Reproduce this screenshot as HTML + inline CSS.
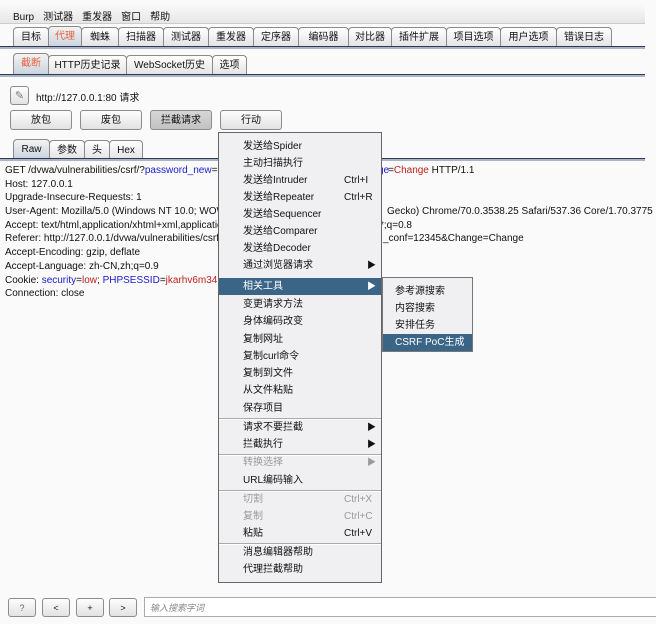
<!DOCTYPE html><html><head><meta charset="utf-8"><style>
body{margin:0;width:656px;height:624px;background:#fafafa;position:relative;overflow:hidden;font-family:"Liberation Sans","Noto Sans CJK SC",sans-serif;font-size:10px;color:#111}
.a{position:absolute}
.menubar{left:0;top:3px;width:645px;height:20px;background:linear-gradient(#fbfbfb,#e6e6e6);border-bottom:1px solid #ccc}
.menubar span{margin-right:9px}
.tab{position:absolute;height:19px;border:1px solid #8a8a8a;border-bottom:none;border-radius:4px 4px 0 0;background:linear-gradient(#fff,#e4e4e4);text-align:center;line-height:19px;box-sizing:border-box;font-size:10px}
.sel{background:linear-gradient(#f3f3f3,#c8d3de);color:#e8603a}
.line{position:absolute;left:0;width:645px;height:1px;background:#2c3a55;border-bottom:2px solid #aab4c2}
.btn{position:absolute;height:20px;border:1px solid #8c8c8c;border-radius:3px;background:linear-gradient(#fdfdfd,#e2e2e2);text-align:center;line-height:19px;box-sizing:border-box}
.req div{height:13.7px;line-height:13.7px;white-space:nowrap}
.b{color:#1a1acc}.r{color:#c0201a}
.menu{left:218px;top:132px;width:164px;height:451px;background:#f0f0f2;border:1px solid #666;box-sizing:border-box}
.mi{position:absolute;left:0;width:162px;height:17px;line-height:17px;padding-left:24px;box-sizing:border-box;white-space:nowrap}
.mi .k{position:absolute;left:125px}
.mi .ar{position:absolute;left:148px;font-size:9px}
.hl{background:#3b6587;color:#fff}
.dis{color:#9a9a9a}
.sep{position:absolute;left:0;width:162px;height:1px;background:#aaa;border-bottom:1px solid #fff}
</style></head><body>
<div class="a menubar"><div style="padding:5px 0 0 13px"><span>Burp</span><span>测试器</span><span>重发器</span><span>窗口</span><span>帮助</span></div></div>
<div class="tab" style="left:13px;top:27px;width:36px">目标</div>
<div class="tab sel" style="left:48px;top:26px;width:34px;height:21px">代理</div>
<div class="tab" style="left:81px;top:27px;width:38px">蜘蛛</div>
<div class="tab" style="left:118px;top:27px;width:46px">扫描器</div>
<div class="tab" style="left:163px;top:27px;width:46px">测试器</div>
<div class="tab" style="left:208px;top:27px;width:46px">重发器</div>
<div class="tab" style="left:253px;top:27px;width:46px">定序器</div>
<div class="tab" style="left:298px;top:27px;width:51px">编码器</div>
<div class="tab" style="left:348px;top:27px;width:44px">对比器</div>
<div class="tab" style="left:391px;top:27px;width:56px">插件扩展</div>
<div class="tab" style="left:446px;top:27px;width:55px">项目选项</div>
<div class="tab" style="left:500px;top:27px;width:57px">用户选项</div>
<div class="tab" style="left:556px;top:27px;width:56px">错误日志</div>
<div class="line" style="top:46px"></div>
<div class="tab sel" style="left:13px;top:53px;width:36px;height:22px">截断</div>
<div class="tab" style="left:48px;top:55px;width:79px">HTTP历史记录</div>
<div class="tab" style="left:126px;top:55px;width:87px">WebSocket历史</div>
<div class="tab" style="left:212px;top:55px;width:35px">选项</div>
<div class="line" style="top:74px"></div>
<div class="btn" style="left:10px;top:86px;width:19px;height:19px;font-size:11px;color:#777">✎</div>
<div class="a" style="left:36px;top:89px">http://127.0.0.1:80 请求</div>
<div class="btn" style="left:10px;top:110px;width:62px">放包</div>
<div class="btn" style="left:80px;top:110px;width:62px">废包</div>
<div class="btn" style="left:150px;top:110px;width:62px;background:linear-gradient(#d6d6d6,#c2c2c2)">拦截请求</div>
<div class="btn" style="left:220px;top:110px;width:62px">行动</div>
<div class="tab sel" style="left:13px;top:139px;width:37px;height:20px;color:#111">Raw</div>
<div class="tab" style="left:49px;top:140px;width:36px">参数</div>
<div class="tab" style="left:84px;top:140px;width:26px">头</div>
<div class="tab" style="left:109px;top:140px;width:34px">Hex</div>
<div class="line" style="top:158px"></div>
<div class="a req" style="left:5px;top:164px">
<div>GET /dvwa/vulnerabilities/csrf/?<span class="b">password_new</span>=<span class="a b" style="left:373px">ge</span><span class="a" style="left:383px">=<span class="r">Change</span> HTTP/1.1</span></div>
<div>Host: 127.0.0.1</div>
<div>Upgrade-Insecure-Requests: 1</div>
<div>User-Agent: Mozilla/5.0 (Windows NT 10.0; WOW<span class="a" style="left:382px">Gecko) Chrome/70.0.3538.25 Safari/537.36 Core/1.70.3775</span></div>
<div>Accept: text/html,application/xhtml+xml,application<span class="a" style="left:375px">*;q=0.8</span></div>
<div>Referer: http://127.0.0.1/dvwa/vulnerabilities/csrf<span class="a" style="left:378px">_conf=12345&amp;Change=Change</span></div>
<div>Accept-Encoding: gzip, deflate</div>
<div>Accept-Language: zh-CN,zh;q=0.9</div>
<div>Cookie: <span class="b">security</span>=<span class="r">low</span>; <span class="b">PHPSESSID</span>=<span class="r">jkarhv6m34l4</span></div>
<div>Connection: close</div>
</div>
<div class="a menu">
<div class="mi" style="top:5px">发送给Spider</div>
<div class="mi" style="top:22px">主动扫描执行</div>
<div class="mi" style="top:39px">发送给Intruder<span class="k">Ctrl+I</span></div>
<div class="mi" style="top:56px">发送给Repeater<span class="k">Ctrl+R</span></div>
<div class="mi" style="top:73px">发送给Sequencer</div>
<div class="mi" style="top:90px">发送给Comparer</div>
<div class="mi" style="top:107px">发送给Decoder</div>
<div class="mi" style="top:124px">通过浏览器请求<span class="ar">▶</span></div>
<div class="mi hl" style="top:145px">相关工具<span class="ar">▶</span></div>
<div class="mi" style="top:163px">变更请求方法</div>
<div class="mi" style="top:180px">身体编码改变</div>
<div class="mi" style="top:198px">复制网址</div>
<div class="mi" style="top:215px">复制curl命令</div>
<div class="mi" style="top:232px">复制到文件</div>
<div class="mi" style="top:249px">从文件粘贴</div>
<div class="mi" style="top:267px">保存项目</div>
<div class="sep" style="top:285px"></div>
<div class="mi" style="top:286px">请求不要拦截<span class="ar">▶</span></div>
<div class="mi" style="top:303px">拦截执行<span class="ar">▶</span></div>
<div class="sep" style="top:321px"></div>
<div class="mi dis" style="top:321px">转换选择<span class="ar">▶</span></div>
<div class="mi" style="top:339px">URL编码输入</div>
<div class="sep" style="top:357px"></div>
<div class="mi dis" style="top:358px">切割<span class="k">Ctrl+X</span></div>
<div class="mi dis" style="top:375px">复制<span class="k">Ctrl+C</span></div>
<div class="mi" style="top:392px">粘贴<span class="k">Ctrl+V</span></div>
<div class="sep" style="top:410px"></div>
<div class="mi" style="top:411px">消息编辑器帮助</div>
<div class="mi" style="top:428px">代理拦截帮助</div>
</div>
<div class="a" style="left:382px;top:277px;width:91px;height:75px;background:#f0f0f2;border:1px solid #777;box-sizing:border-box">
<div class="mi" style="top:5px;width:89px;padding-left:12px">参考源搜索</div>
<div class="mi" style="top:22px;width:89px;padding-left:12px">内容搜索</div>
<div class="mi" style="top:39px;width:89px;padding-left:12px">安排任务</div>
<div class="mi hl" style="top:56px;width:89px;padding-left:12px">CSRF PoC生成</div>
</div>
<div class="btn" style="left:8px;top:598px;width:28px;height:19px;font-size:9px;color:#666">?</div>
<div class="btn" style="left:42px;top:598px;width:28px;height:19px;font-size:9px">&lt;</div>
<div class="btn" style="left:76px;top:598px;width:28px;height:19px;font-size:9px">+</div>
<div class="btn" style="left:109px;top:598px;width:28px;height:19px;font-size:9px">&gt;</div>
<div class="a" style="left:144px;top:597px;width:520px;height:20px;border:1px solid #aaa;background:#fff;box-sizing:border-box;padding:3px 5px;color:#888;font-style:italic;font-size:9px">输入搜索字词</div>
</body></html>
